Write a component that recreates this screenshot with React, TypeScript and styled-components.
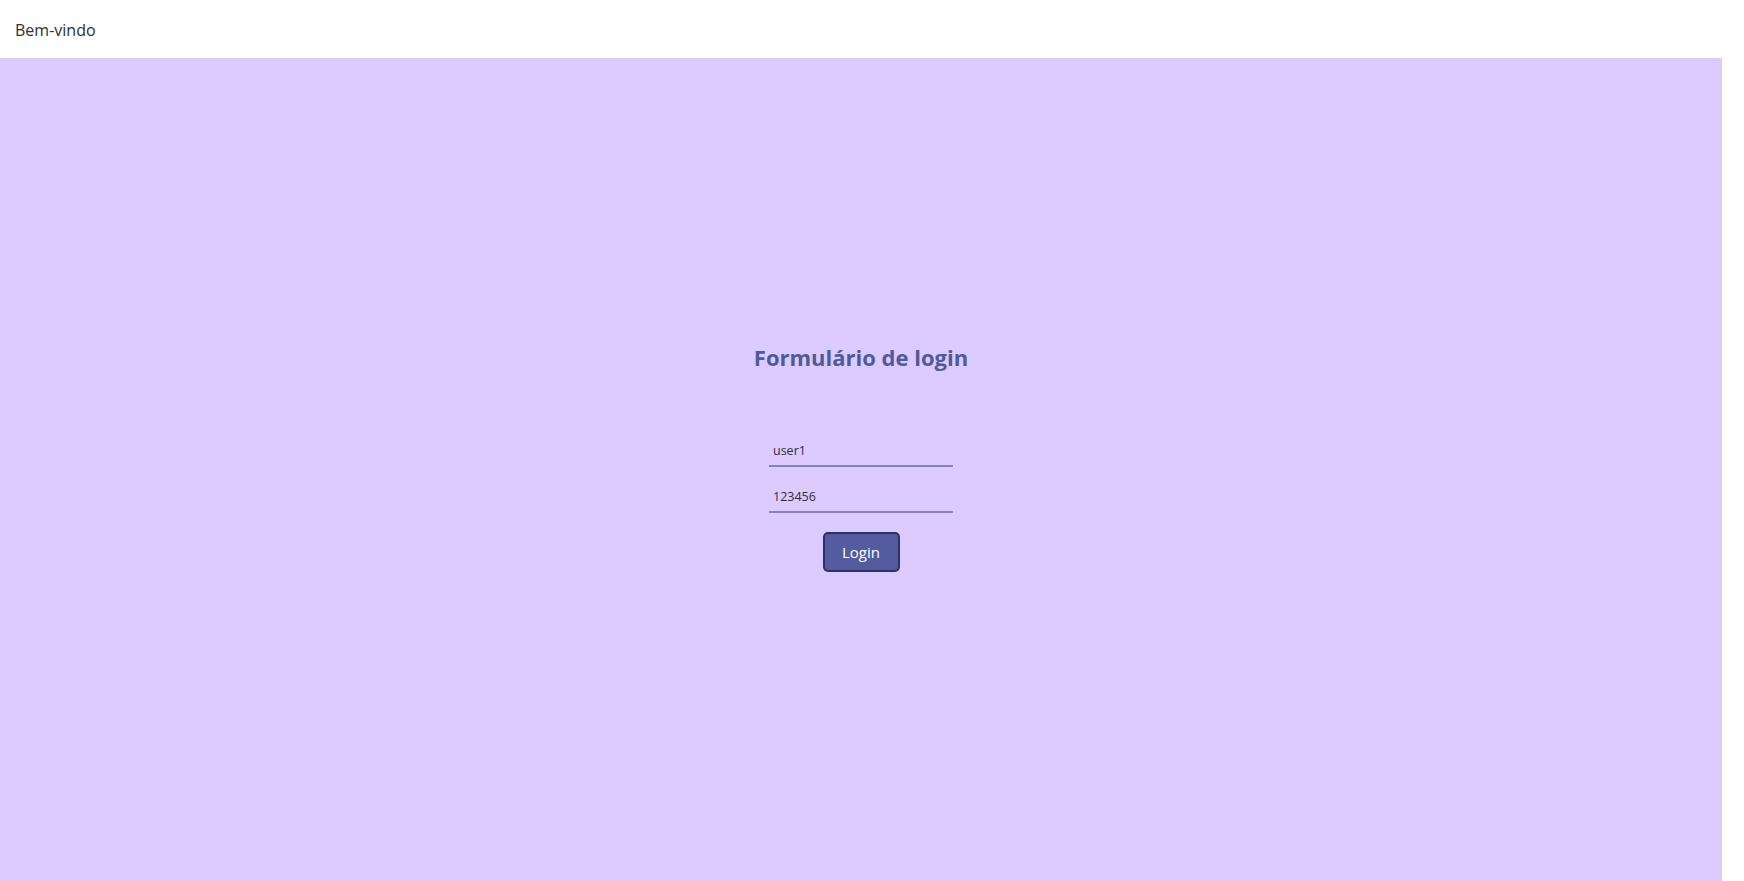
import styled, { createGlobalStyle } from 'styled-components';

const GlobalStyle = createGlobalStyle`
  html, body {
    margin: 0;
    padding: 0;
    height: 100%;
    background: #ffffff;
    font-family: "Segoe UI", "Open Sans", "Noto Sans", sans-serif;
  }
  #root {
    min-height: 100%;
  }
`;

const Page = styled.div`
  display: flex;
  flex-direction: column;
  min-height: 100vh;
  padding-right: 22px;
  box-sizing: border-box;
`;

const Header = styled.header`
  display: flex;
  align-items: center;
  height: 58px;
  padding: 2px 0 0 15px;
  box-sizing: border-box;
  background: #ffffff;
  color: #2b2f33;
  font-size: 16px;
`;

const Main = styled.main`
  flex: 1;
  display: flex;
  flex-direction: column;
  align-items: center;
  justify-content: center;
  padding-bottom: 26px;
  background: #dccbfe;
`;

const Title = styled.h2`
  margin: 0 0 62px;
  font-size: 22px;
  line-height: 32px;
  font-weight: 700;
  color: #4f5a9b;
`;

const Form = styled.form`
  display: flex;
  flex-direction: column;
  align-items: center;
`;

const Field = styled.input`
  width: 184px;
  height: 32px;
  margin-bottom: 14px;
  padding: 0 4px;
  box-sizing: border-box;
  border: none;
  border-bottom: 2px solid #8583ba;
  background: transparent;
  font-family: inherit;
  font-size: 12.5px;
  color: #2f2f3a;
  outline: none;
`;

const Button = styled.button`
  width: 77px;
  height: 40px;
  margin-top: 5px;
  border: 2px solid #2d3266;
  border-radius: 5px;
  background: #535c9e;
  color: #ffffff;
  font-family: inherit;
  font-size: 15px;
  cursor: pointer;
`;

export default function App() {
  return (
    <>
      <GlobalStyle />
      <Page>
        <Header>Bem-vindo</Header>
        <Main>
          <Title>Formulário de login</Title>
          <Form onSubmit={(e) => e.preventDefault()}>
            <Field type="text" defaultValue="user1" />
            <Field type="text" defaultValue="123456" />
            <Button type="submit">Login</Button>
          </Form>
        </Main>
      </Page>
    </>
  );
}
